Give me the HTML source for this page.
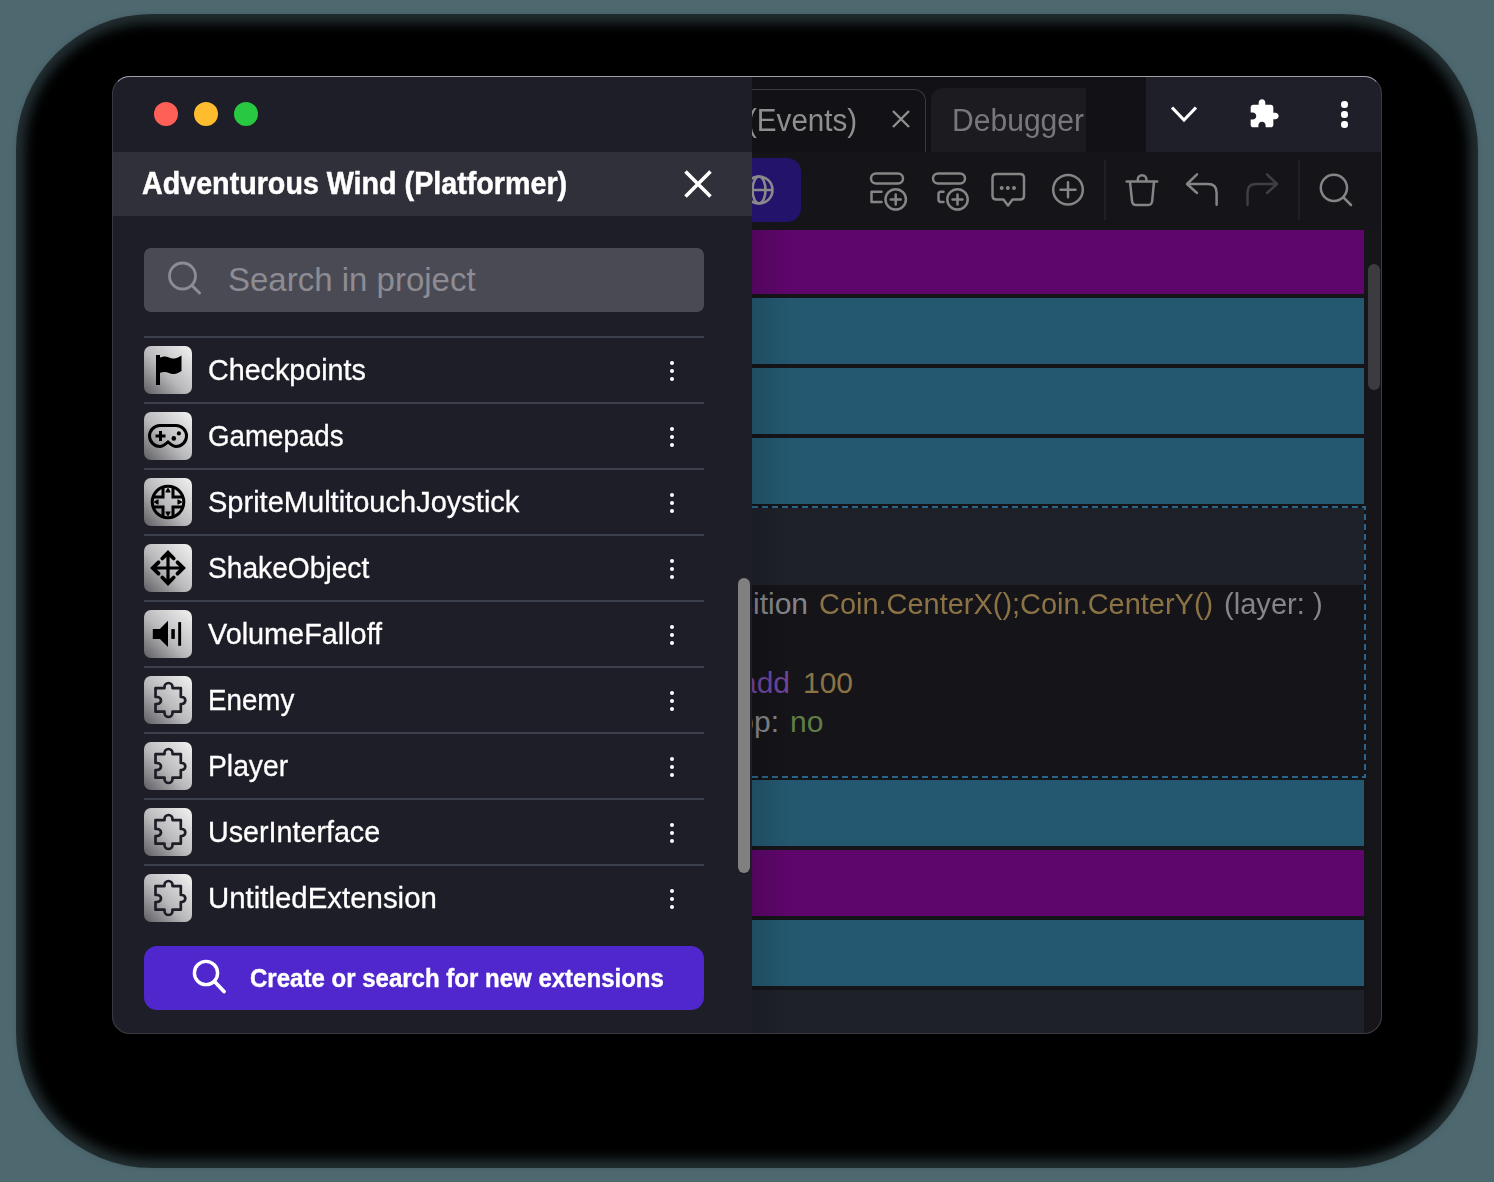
<!DOCTYPE html>
<html><head><meta charset="utf-8">
<style>
*{margin:0;padding:0;box-sizing:border-box}
html,body{width:1494px;height:1182px;overflow:hidden;background:#4e6870;font-family:"Liberation Sans",sans-serif}
.abs{position:absolute}
#shadow1{position:absolute;left:16px;top:14px;width:1462px;height:1154px;border-radius:136px;background:rgba(0,0,0,0.55)}
#shadow{position:absolute;left:25px;top:23px;width:1444px;height:1136px;border-radius:126px;background:#000;filter:blur(6px)}
#win{position:absolute;left:112px;top:76px;width:1270px;height:958px;border-radius:18px;overflow:hidden;background:#141419}
#wborder{position:absolute;left:112px;top:76px;width:1270px;height:958px;border-radius:18px;border:1px solid #3a3a42;border-top:1.6px solid #a0a0a8;pointer-events:none}
/* right side */
#tabbar{left:640px;top:0;width:394px;height:76px;background:#121216}
#rightic{left:1034px;top:0;width:236px;height:76px;background:#1e1f29}
#toolbar{left:640px;top:76px;width:630px;height:78px;background:#141419}
.bar{position:absolute;left:640px;width:612px;height:66px}
.purple{background:#5e066b}
.teal{background:#245870}

.tab1{left:600px;top:13px;width:214px;height:63px;border:1.5px solid #3a3a3f;border-bottom:none;border-radius:0 12px 0 0;background:#121216}
.tt{position:absolute;height:76px;line-height:76px;font-size:31px;white-space:nowrap}
.tab2{left:819px;top:12px;width:155px;height:64px;border-radius:12px 0 0 0;background:#1b1b20;overflow:hidden}
.kb{left:1229px;top:25px;width:7px;height:28px}
.kb i{position:absolute;left:0;width:6.5px;height:6.5px;border-radius:50%;background:#fff}
.gbtn{left:560px;top:82px;width:129px;height:64px;border-radius:14px;background:#24136b}
.sel{left:640px;top:430px;width:614px;height:272px;background:#141419}
.selh{left:640px;top:432px;width:612px;height:77px;background:#1f2129}
.code{height:40px;line-height:40px;font-size:30px;white-space:nowrap}
.code.g{color:#84868a}.code.y{color:#8c7346}.code.p{color:#6e46a0}.code.gr{color:#5f7d46}
.botm{left:640px;top:914px;width:612px;height:44px;background:#1f2129}
.trk{left:1254px;top:154px;width:16px;height:804px;background:#16161a}
.thumb{left:1256px;top:188px;width:12px;height:126px;border-radius:6px;background:#3c3c40}
.lshade{left:640px;top:154px;width:40px;height:804px;background:linear-gradient(90deg,rgba(0,0,0,0.13),rgba(0,0,0,0))}
/* drawer */
.tl{width:24px;height:24px;border-radius:50%}
.dthumb{left:626px;top:502px;width:12px;height:295px;border-radius:6px;background:#808080}

#drawer{left:0;top:0;width:640px;height:958px;background:#1e1e28}
#dhead{left:0;top:76px;width:640px;height:64px;background:#30303a}
.title{position:absolute;left:30px;top:0;height:64px;line-height:64px;color:#fff;font-weight:bold;font-size:31px;white-space:nowrap;-webkit-text-stroke:0.5px #fff}
.sx{display:inline-block;transform-origin:0 50%}
.ph{position:absolute;left:84px;top:0;height:64px;line-height:64px;font-size:33px;color:#8d8c93;white-space:nowrap}
#search{left:32px;top:172px;width:560px;height:64px;border-radius:7px;background:#4a4a55}
.row{position:absolute;left:32px;width:560px;height:66px}
.row .div{position:absolute;left:0;top:0;width:560px;height:2px;background:#3b404c}
.row .ic{position:absolute;left:0;top:10px;width:48px;height:48px;border-radius:7px;background:linear-gradient(225deg,#f2f2f2 0%,#b9b9bc 55%,#5e5e62 100%)}
.row .ic svg{position:absolute;left:0;top:0}
.row .nm{position:absolute;left:64px;top:0.5px;height:66px;line-height:66px;color:#fff;font-size:29px;-webkit-text-stroke:0.3px #fff}
.row .dots{position:absolute;left:525.6px;top:24.8px;width:6px;height:20px}
.dots i{position:absolute;left:0;width:4.6px;height:4.6px;border-radius:50%;background:#fff}
.bt{position:absolute;left:106px;top:0;height:64px;line-height:64px;font-size:26px;font-weight:bold;color:#fff;white-space:nowrap;-webkit-text-stroke:0.4px #fff}
#btn{left:32px;top:870px;width:560px;height:64px;border-radius:13px;background:#4f27cd}
</style></head><body>
<div id="shadow1"></div><div id="shadow"></div>
<div id="win">
  <div class="abs" id="tabbar"></div>
  <div class="abs" id="rightic"></div>
  <div class="abs tab1"></div>
  <div class="abs tt" style="left:634.5px;top:7px;color:#8f8f8f"><span class="sx" style="transform:scaleX(0.955)">(Events)</span></div>
  <svg class="abs" style="left:780px;top:34px" width="18" height="18" viewBox="0 0 18 18"><path d="M1 1 L17 17 M17 1 L1 17" stroke="#8f8f8f" stroke-width="2.4"/></svg>
  <div class="abs tab2"><div class="tt" style="left:21px;top:-5px;color:#77777c"><span class="sx" style="transform:scaleX(0.97)">Debugger</span></div></div>
  <svg class="abs" style="left:1058px;top:28px" width="28" height="20" viewBox="0 0 28 20"><path d="M2 3.5 L14 16 L26 3.5" fill="none" stroke="#fff" stroke-width="3.2"/></svg>
  <svg class="abs" style="left:1136px;top:21.8px" width="32" height="32" viewBox="0 0 24 24"><path fill="#fff" d="M20.5 11H19V7c0-1.1-.9-2-2-2h-4V3.5C13 2.12 11.88 1 10.5 1S8 2.12 8 3.5V5H4c-1.1 0-1.99.9-1.99 2v3.8H3.5c1.49 0 2.7 1.21 2.7 2.7s-1.21 2.7-2.7 2.7H2V20c0 1.1.9 2 2 2h3.8v-1.5c0-1.49 1.21-2.7 2.7-2.7 1.49 0 2.7 1.21 2.7 2.7V22H17c1.1 0 2-.9 2-2v-4h1.5c1.38 0 2.5-1.12 2.5-2.5S21.88 11 20.5 11z"/></svg>
  <div class="abs kb"><i style="top:0"></i><i style="top:10px"></i><i style="top:20px"></i></div>
  <div class="abs" id="toolbar"></div>
  <div class="abs gbtn"><svg class="abs" style="left:69px;top:14px" width="36" height="36" viewBox="0 0 36 36"><circle cx="18" cy="18" r="13.5" fill="none" stroke="#8a8a8a" stroke-width="2.6"/><ellipse cx="18" cy="18" rx="6.5" ry="13.5" fill="none" stroke="#8a8a8a" stroke-width="2.6"/><path d="M4.5 18 H31.5" stroke="#8a8a8a" stroke-width="2.6"/></svg></div>
  <svg class="abs" style="left:740px;top:84px" width="530" height="60" viewBox="740 84 530 60">
    <g fill="none" stroke="#858585" stroke-width="2.5" stroke-linecap="round" stroke-linejoin="round">
      <rect x="759" y="97.5" width="32" height="10" rx="5"/>
      <path d="M769.5 115.8 H759.5 V126 H769.5"/>
      <circle cx="783.7" cy="123.4" r="10.2"/><path d="M783.7 118.4 V128.4 M778.7 123.4 H788.7"/>
      <rect x="821" y="97.5" width="32" height="10" rx="5"/>
      <path d="M831.5 115.8 H829 Q826.5 115.8 826.5 118.3 V123.5 Q826.5 126 829 126 H831.5"/>
      <circle cx="845.5" cy="123.4" r="10.2"/><path d="M845.5 118.4 V128.4 M840.5 123.4 H850.5"/>
      <path d="M884.5 98 H908 Q912 98 912 102 V119.5 Q912 123.5 908 123.5 H900.5 L896 129.5 L891.5 123.5 H884.5 Q880.5 123.5 880.5 119.5 V102 Q880.5 98 884.5 98 Z"/>
      <circle cx="956" cy="113.7" r="14.8"/>
    </g><g fill="#858585"><circle cx="889.7" cy="112.1" r="2"/><circle cx="895.8" cy="112.1" r="2"/><circle cx="902" cy="112.1" r="2"/></g><g fill="none" stroke="#858585" stroke-width="2.5" stroke-linecap="round" stroke-linejoin="round"><path d="M956 106.2 V121.2 M948.5 113.7 H963.5"/>
      <path d="M1014.6 105.6 H1045.2 M1025.8 105.6 V103.5 A4.3 4.3 0 0 1 1034.4 103.5 V105.6 M1018 105.6 L1020 125 Q1020.4 129 1024 129 H1036.2 Q1039.8 129 1040.2 125 L1042 105.6"/>
      <path d="M1085 98.3 L1075 108 L1085 117 M1075 108 H1096 Q1104.6 108 1104.6 116.6 V128.7"/>
      <circle cx="1221.9" cy="111.8" r="13.1"/><path d="M1231.5 121.5 L1239 129"/>
    </g>
    <path d="M1155 98.3 L1165 108 L1155 117 M1165 108 H1144 Q1135.5 108 1135.5 116.6 V128.7" fill="none" stroke="#3e3e44" stroke-width="2.5" stroke-linecap="round" stroke-linejoin="round"/>
    <path d="M993 82 V146 M1187 82 V146" stroke="#25252a" stroke-width="1.5"/>
  </svg>
  <div class="bar purple" style="top:154px;height:64px"></div>
  <div class="bar teal" style="top:222px"></div>
  <div class="bar teal" style="top:292px"></div>
  <div class="bar teal" style="top:362px"></div>
  <div class="abs sel"></div><svg class="abs" style="left:600px;top:430px" width="654" height="272"><path d="M0 1 H653 V271 H0" fill="none" stroke="#29658a" stroke-width="2" stroke-dasharray="6 4"/></svg>
  <div class="abs selh"></div>
  <div class="abs code g" style="top:508px;left:300px;width:396px;text-align:right">Create Coin at position</div>
  <div class="abs code y" style="top:508px;left:707px"><span class="sx" id="c1" style="transform:scaleX(0.965)">Coin.CenterX();Coin.CenterY()</span></div>
  <div class="abs code g" style="top:508px;left:1112px"><span class="sx" id="c2" style="transform:scaleX(0.97)">(layer: )</span></div>
  <div class="abs code p" style="top:587px;left:300px;width:378px;text-align:right">Change the score: add</div>
  <div class="abs code y" style="top:587px;left:691px"><span class="sx" id="c3">100</span></div>
  <div class="abs code g" style="top:626px;left:300px;width:367px;text-align:right">Stop:</div>
  <div class="abs code gr" style="top:626px;left:678px"><span class="sx" id="c4">no</span></div>
  <div class="bar teal" style="top:704px"></div>
  <div class="bar purple" style="top:774px"></div>
  <div class="bar teal" style="top:844px"></div>
  <div class="abs botm"></div>
  <div class="abs trk"></div>
  <div class="abs thumb"></div>
  <div class="abs lshade"></div>
  <div class="abs" id="drawer">
    <div class="abs tl" style="left:42px;top:26px;background:#fe5f57"></div>
    <div class="abs tl" style="left:82px;top:26px;background:#febc2e"></div>
    <div class="abs tl" style="left:122px;top:26px;background:#28c840"></div>
    <div class="abs dthumb"></div>
    <div class="abs" id="dhead"><div class="title"><span class="sx" style="transform:scaleX(0.925)">Adventurous Wind (Platformer)</span></div><svg class="abs" style="left:572px;top:18px" width="28" height="28" viewBox="0 0 28 28"><path d="M1.5 1.5 L26.5 26.5 M26.5 1.5 L1.5 26.5" stroke="#fff" stroke-width="3.6"/></svg></div>
    <div class="abs" id="search"><svg class="abs" style="left:22px;top:12px" width="38" height="38" viewBox="0 0 38 38"><circle cx="16.5" cy="16" r="13" fill="none" stroke="#8d8c93" stroke-width="2.8"/><path d="M26 25.5 L33.5 33" stroke="#8d8c93" stroke-width="3" stroke-linecap="round"/></svg><div class="ph">Search in project</div></div>
    <div class="row" style="top:260px"><div class="div"></div><div class="ic"><svg width="48" height="48" viewBox="0 0 48 48"><rect x="12" y="9" width="4" height="30"/><path d="M15.5 12 C19 10,22 10,25 11.5 C28 13,31 13.5,37.5 9.5 L37.5 25 C31 29,28 28.5,25 27 C22 25.5,19 25.5,15.5 27 Z"/></svg></div><div class="nm"><span class="sx" style="transform:scaleX(0.989)">Checkpoints</span></div><div class="dots"><i style="top:0"></i><i style="top:8px"></i><i style="top:16px"></i></div></div>
    <div class="row" style="top:326px"><div class="div"></div><div class="ic"><svg width="48" height="48" viewBox="0 0 48 48"><path d="M16 13.5 H32 A10.5 10.5 0 0 1 32 34.5 C29 34.5,26.5 32,24 30 C21.5 32,19 34.5,16 34.5 A10.5 10.5 0 0 1 16 13.5 Z" fill="none" stroke="#000" stroke-width="3"/><rect x="11.5" y="22.5" width="10" height="3"/><rect x="15" y="19" width="3" height="10"/><circle cx="34.9" cy="21.4" r="2.1"/><circle cx="29.8" cy="26.4" r="2.3"/></svg></div><div class="nm"><span class="sx" style="transform:scaleX(0.956)">Gamepads</span></div><div class="dots"><i style="top:0"></i><i style="top:8px"></i><i style="top:16px"></i></div></div>
    <div class="row" style="top:392px"><div class="div"></div><div class="ic"><svg width="48" height="48" viewBox="0 0 48 48"><circle cx="24" cy="24" r="15.8" fill="none" stroke="#000" stroke-width="3"/><path d="M19 8.5 V19 H8.5 M29 8.5 V19 H39.5 M19 39.5 V29 H8.5 M29 39.5 V29 H39.5" fill="none" stroke="#000" stroke-width="3"/><path d="M24 10.5 L26 14 H22 Z M24 37.5 L26 34 H22 Z M10.5 24 L14 22 V26 Z M37.5 24 L34 22 V26 Z" stroke="#000" stroke-width="1.2" stroke-linejoin="round"/></svg></div><div class="nm"><span class="sx" style="transform:scaleX(1.001)">SpriteMultitouchJoystick</span></div><div class="dots"><i style="top:0"></i><i style="top:8px"></i><i style="top:16px"></i></div></div>
    <div class="row" style="top:458px"><div class="div"></div><div class="ic"><svg width="48" height="48" viewBox="0 0 48 48"><path d="M24 10 V38 M10 24 H38" stroke="#000" stroke-width="3.2"/><path d="M18.3 14.5 L24 8.8 L29.7 14.5 M18.3 33.5 L24 39.2 L29.7 33.5 M14.5 18.3 L8.8 24 L14.5 29.7 M33.5 18.3 L39.2 24 L33.5 29.7" fill="none" stroke="#000" stroke-width="3.8" stroke-linecap="round" stroke-linejoin="miter"/></svg></div><div class="nm"><span class="sx" style="transform:scaleX(0.971)">ShakeObject</span></div><div class="dots"><i style="top:0"></i><i style="top:8px"></i><i style="top:16px"></i></div></div>
    <div class="row" style="top:524px"><div class="div"></div><div class="ic"><svg width="48" height="48" viewBox="0 0 48 48"><path d="M8.8 19.1 H15.9 L24 10.8 V37 L15.9 28.9 H8.8 Z"/><rect x="27.3" y="19.1" width="3.5" height="9.8"/><rect x="34.2" y="12.1" width="2.9" height="23.7"/></svg></div><div class="nm"><span class="sx" style="transform:scaleX(0.994)">VolumeFalloff</span></div><div class="dots"><i style="top:0"></i><i style="top:8px"></i><i style="top:16px"></i></div></div>
    <div class="row" style="top:590px"><div class="div"></div><div class="ic"><svg width="48" height="48" viewBox="0 0 48 48"><path d="M11.5 12.1 H20.5 V11 A4 4 0 0 1 28.5 11 V12.1 H36.8 V21 H37.8 A3.5 3.5 0 0 1 37.8 28 H36.8 V35.7 H28.5 V37 A4 4 0 0 1 20.5 37 V35.7 H11.5 V28 H13 A4 3.5 0 0 0 13 21 H11.5 Z" fill="none" stroke="#1e1e27" stroke-width="2.7" stroke-linejoin="round"/></svg></div><div class="nm"><span class="sx" style="transform:scaleX(0.956)">Enemy</span></div><div class="dots"><i style="top:0"></i><i style="top:8px"></i><i style="top:16px"></i></div></div>
    <div class="row" style="top:656px"><div class="div"></div><div class="ic"><svg width="48" height="48" viewBox="0 0 48 48"><path d="M11.5 12.1 H20.5 V11 A4 4 0 0 1 28.5 11 V12.1 H36.8 V21 H37.8 A3.5 3.5 0 0 1 37.8 28 H36.8 V35.7 H28.5 V37 A4 4 0 0 1 20.5 37 V35.7 H11.5 V28 H13 A4 3.5 0 0 0 13 21 H11.5 Z" fill="none" stroke="#1e1e27" stroke-width="2.7" stroke-linejoin="round"/></svg></div><div class="nm"><span class="sx" style="transform:scaleX(0.975)">Player</span></div><div class="dots"><i style="top:0"></i><i style="top:8px"></i><i style="top:16px"></i></div></div>
    <div class="row" style="top:722px"><div class="div"></div><div class="ic"><svg width="48" height="48" viewBox="0 0 48 48"><path d="M11.5 12.1 H20.5 V11 A4 4 0 0 1 28.5 11 V12.1 H36.8 V21 H37.8 A3.5 3.5 0 0 1 37.8 28 H36.8 V35.7 H28.5 V37 A4 4 0 0 1 20.5 37 V35.7 H11.5 V28 H13 A4 3.5 0 0 0 13 21 H11.5 Z" fill="none" stroke="#1e1e27" stroke-width="2.7" stroke-linejoin="round"/></svg></div><div class="nm"><span class="sx" style="transform:scaleX(0.989)">UserInterface</span></div><div class="dots"><i style="top:0"></i><i style="top:8px"></i><i style="top:16px"></i></div></div>
    <div class="row" style="top:788px"><div class="div"></div><div class="ic"><svg width="48" height="48" viewBox="0 0 48 48"><path d="M11.5 12.1 H20.5 V11 A4 4 0 0 1 28.5 11 V12.1 H36.8 V21 H37.8 A3.5 3.5 0 0 1 37.8 28 H36.8 V35.7 H28.5 V37 A4 4 0 0 1 20.5 37 V35.7 H11.5 V28 H13 A4 3.5 0 0 0 13 21 H11.5 Z" fill="none" stroke="#1e1e27" stroke-width="2.7" stroke-linejoin="round"/></svg></div><div class="nm"><span class="sx" style="transform:scaleX(1.014)">UntitledExtension</span></div><div class="dots"><i style="top:0"></i><i style="top:8px"></i><i style="top:16px"></i></div></div>
    <div class="abs" id="btn"><svg class="abs" style="left:46px;top:12px" width="40" height="40" viewBox="0 0 40 40"><circle cx="16" cy="15" r="11.6" fill="none" stroke="#fff" stroke-width="3.4"/><path d="M24.5 23.5 L34 33.5" stroke="#fff" stroke-width="3.8" stroke-linecap="round"/></svg><div class="bt"><span class="sx" style="transform:scaleX(0.924)">Create or search for new extensions</span></div></div>
  </div>
</div>
<div id="wborder"></div>
</body></html>
